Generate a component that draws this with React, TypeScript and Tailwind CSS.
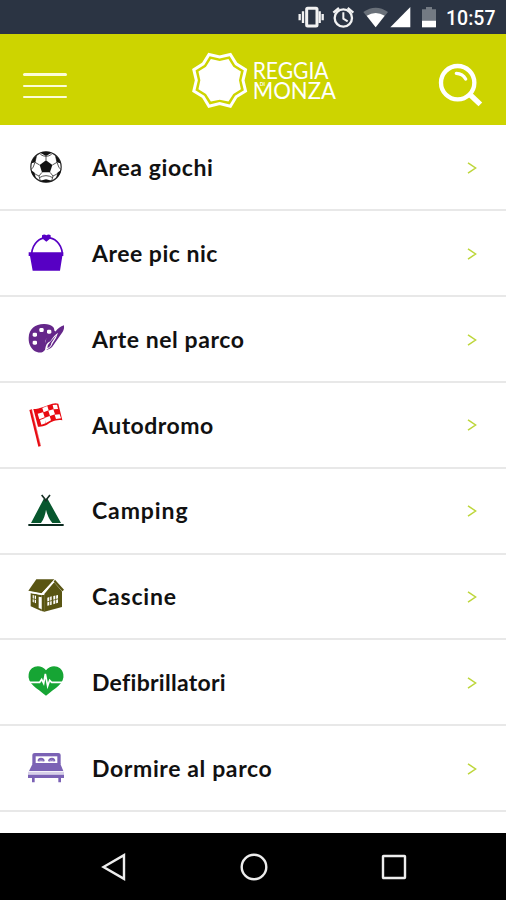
import type { ReactNode } from "react";

interface Category {
    label: string;
    tracking: string;
    icon: ReactNode;
}

function starPoints(cx: number, cy: number, outer: number, inner: number) {
    return Array.from({ length: 16 }, (_, i) => {
        const angle = (Math.PI / 8) * i;
        const r = i % 2 ? outer : inner;
        return `${(cx + r * Math.cos(angle)).toFixed(1)},${(cy + r * Math.sin(angle)).toFixed(1)}`;
    }).join(" ");
}

const SoccerBall = () => (
    <g>
        <circle cx="60" cy="72" r="45.5" fill="white" stroke="#222" strokeWidth="3.5" />
        <path d="M60 52L79 66L72 88H48L41 66Z" fill="#111" />
        <path
            d="M60 52V39M79 66L93 58M72 88L81 99M48 88L39 99M41 66L27 58M43 34Q60 46 77 34M93 58L89 40M93 58Q98 76 105 80M81 99Q95 94 99 86M81 99L77 114M39 99Q25 94 21 86M39 99L43 114M27 58Q22 76 15 80M27 58L31 40M40 104Q60 92 80 104"
            fill="none"
            stroke="#333"
            strokeWidth="2.5"
        />
        <path d="M43 29Q60 24 77 29L60 39ZM88 37Q101 48 103 61L93 58ZM32 37Q19 48 17 61L27 58ZM105 81Q102 98 90 106L95 89ZM15 81Q18 98 30 106L25 89ZM42 113L60 109L78 113Q60 122 42 113Z" fill="#111" />
    </g>
);

const Basket = () => (
    <g fill="#5700c4">
        <path d="M17 73C23 10 103 10 109 73" fill="none" stroke="#5700c4" strokeWidth="5" />
        <path d="M48 19Q55 14 61 19Q68 14 74 19V28L61 38L48 28Z" />
        <path d="M8 70H112V81H109L102 125H20L12 81H8Z" />
    </g>
);

const Palette = () => (
    <g>
        <path d="M8 68C9 42 28 27 53 27C76 26 89 37 84 52C75 65 54 69 59 84C65 106 49 117 33 111C16 105 7 87 8 68Z" fill="#65278a" />
        <path d="M80 45L63 62L54 98L82 88L89 49Z" fill="#65278a" />
        <g fill="white">
            <rect x="40" y="39" width="13" height="12" rx="4" />
            <rect x="63" y="44" width="13" height="12" rx="4" />
            <rect x="20" y="53" width="13" height="12" rx="4" />
            <rect x="20" y="77" width="13" height="12" rx="4" />
        </g>
        <path d="M114 31Q116 47 104 59L82 91Q75 102 61 105Q67 94 68 84L88 50Q98 36 114 31Z" fill="#65278a" />
        <path d="M96 53Q85 60 73 79Q58 84 58 105Q74 101 80 85Q91 71 96 53Z" fill="white" />
        <path d="M92 59L76 84Q75 95 64 99Q65 88 72 82Z" fill="#65278a" />
    </g>
);

const RaceFlag = () => (
    <g>
        <path d="M14 26L41 136" stroke="#e80b12" strokeWidth="8" />
        <path d="M18 28L44 134" stroke="white" strokeWidth="1.5" opacity=".7" />
        <path d="M22 24C43 24 61 13 79 8Q89 6 97 8L109 58C89 54 72 65 60 73Q49 78 36 77Z" fill="#e80b12" />
        <path d="M49 21L64 15L68 28L53 34ZM80 12L93 11L96 24L83 25ZM35 38L51 34L56 49L40 55ZM67 29L82 25L87 40L72 45ZM55 51L71 45L75 58L60 66ZM86 41L101 40L105 52L90 54ZM42 57L56 52L59 67L46 71Z" fill="white" />
    </g>
);

const Tent = () => (
    <g>
        <path d="M53 36L15 108H45Q57 91 60 68Q65 91 79 108H105L65 36Z" fill="#07572e" />
        <path d="M47 24L62 43M72 24L57 43" stroke="#183026" strokeWidth="5" />
        <path d="M7 114H113" stroke="#0b2b20" strokeWidth="6" />
    </g>
);

const Farmhouse = () => (
    <g fill="#595513">
        <path d="M31 22H85L47 64L7 56Z" />
        <path d="M14 63L46 69V117L14 103Z" />
        <path d="M84 31L108 58V105L55 119V66Z" />
        <path d="M46 69H56V119L46 117Z" />
        <path d="M8 60L47 67L85 27L112 57" fill="none" stroke="white" strokeWidth="4" />
        <path d="M87 23L114 53L109 58L83 29Z" />
        <path d="M20 69L30 71V94L20 90ZM38 74L47 76V112L38 108ZM64 77L77 73V98L64 101ZM82 72L96 69V92L82 97Z" fill="white" />
        <path d="M25 68V94M18 80L32 83M62 90L98 80M71 73V102M89 69V97" stroke="#595513" strokeWidth="2.5" />
    </g>
);

const HeartPulse = () => (
    <g>
        <path d="M60 37C76 17 108 23 112 49C117 75 88 91 60 113C32 91 3 75 8 49C12 23 44 17 60 37Z" fill="#16a534" />
        <path d="M4 73H41L47 64L53 76L58 48L65 84L71 67L77 73H116" fill="none" stroke="white" strokeWidth="5" />
    </g>
);

const Bed = () => (
    <g fill="#7b62b5">
        <path d="M19 61V33Q19 27 26 27H97Q104 27 104 33V61Z" />
        <path d="M29 37H94V59H29Z" fill="white" />
        <path d="M35 52Q34 41 45 41Q56 41 56 52ZM66 52Q67 41 78 41Q88 41 88 52Z" />
        <path d="M38 52Q45 44 53 52M69 52Q77 44 85 52" fill="none" stroke="#a997d0" strokeWidth="3" />
        <path d="M21 57H102L112 81H9Z" />
        <path d="M6 83H114V92H6Z" opacity=".3" />
        <path d="M6 92H114V102H105V115H97V102H26V115H18V102H6Z" />
    </g>
);

const categories: Category[] = [
    { label: "Area giochi", tracking: "tracking-[0.6px]", icon: <SoccerBall /> },
    { label: "Aree pic nic", tracking: "tracking-[0.5px]", icon: <Basket /> },
    { label: "Arte nel parco", tracking: "tracking-[0.57px]", icon: <Palette /> },
    { label: "Autodromo", tracking: "tracking-[0.48px]", icon: <RaceFlag /> },
    { label: "Camping", tracking: "tracking-[0.9px]", icon: <Tent /> },
    { label: "Cascine", tracking: "tracking-[0.8px]", icon: <Farmhouse /> },
    { label: "Defibrillatori", tracking: "tracking-[0.28px]", icon: <HeartPulse /> },
    { label: "Dormire al parco", tracking: "tracking-[0.62px]", icon: <Bed /> },
];

function StatusBar() {
    return (
        <div className="flex h-[34px] shrink-0 items-center justify-end bg-[#2b3443] pr-[11px] text-white">
            <svg viewBox="0 0 648 108" className="mt-0.5 h-9 w-[150px] shrink-0" preserveAspectRatio="xMinYMid slice">
                <g fill="none" stroke="#f2f2f2">
                    <rect x="50" y="25" width="31" height="53" rx="3" strokeWidth="9" />
                    <path d="M39 34V69M89 34V69" strokeWidth="7" />
                    <path d="M29 42V61M98 42V61" strokeWidth="7" />
                    <circle cx="160" cy="54" r="26" strokeWidth="7" />
                    <path d="M160 37V56L173 64" strokeWidth="6" />
                    <path d="M130 38L147 24M190 38L173 24" strokeWidth="7" />
                </g>
                <path d="M220 36Q257 10 294 36L257 82Z" fill="#697079" />
                <path d="M230 47Q257 31 284 47L257 82Z" fill="white" />
                <path d="M361 21V82H301Z" fill="white" />
                <path d="M396 28H408V21H426V28H438V62H396Z" fill="#737a83" />
                <path d="M396 62H438V82H396Z" fill="white" />
            </svg>
            <span className="mt-[3px] ml-1.5 w-[49px] whitespace-nowrap font-['Roboto',sans-serif] text-[19.5px] leading-none font-medium">
                10:57
            </span>
        </div>
    );
}

function Logo() {
    return (
        <svg viewBox="36 34 440 176" className="h-[58.67px] w-[146.67px] overflow-visible" fill="white">
            <polygon points={starPoints(122, 122, 84, 70)} fill="none" stroke="white" strokeWidth="9" />
            <polygon points={starPoints(122, 122, 69, 58)} />
            <g fontFamily="Lato, sans-serif" fontSize="67">
                <text x="221" y="119" textLength="228" lengthAdjust="spacingAndGlyphs">REGGIA</text>
                <text x="221" y="178" textLength="250" lengthAdjust="spacingAndGlyphs">MONZA</text>
            </g>
            <text x="242" y="139" fontFamily="Lato, sans-serif" fontSize="15" fontWeight="700">DI</text>
        </svg>
    );
}

function Header() {
    return (
        <header className="flex h-[91px] shrink-0 items-center justify-between bg-[#cdd400] pr-[23px] pl-[23px]">
            <button aria-label="Menu" className="mt-3 flex w-11 flex-col gap-[9px]">
                <span className="h-[3px] rounded-full bg-[#fcfdd8]" />
                <span className="h-0.5 rounded-full bg-[#fcfdd8]" />
                <span className="h-0.5 rounded-full bg-[#fcfdd8]" />
            </button>
            <div className="ml-[24px] pt-0.5">
                <Logo />
            </div>
            <button aria-label="Cerca" className="pt-2.5">
                <svg viewBox="54 36 135 132" className="h-11 w-[45px]" fill="none" stroke="white">
                    <circle cx="113" cy="95" r="50" strokeWidth="13" />
                    <path d="M148 129L181 160" strokeWidth="16" />
                    <path d="M109 67Q128 68 137 84" strokeWidth="10" strokeLinecap="round" />
                </svg>
            </button>
        </header>
    );
}

function NavigationBar() {
    return (
        <nav className="flex h-[67px] shrink-0 items-center justify-between bg-black pr-[98px] pl-[100px]">
            <svg viewBox="0 0 28 28" className="size-7" fill="none" stroke="#ededed" strokeWidth="2.4">
                <path d="M3.5 14L24 2.2V25.8Z" />
            </svg>
            <svg viewBox="0 0 28 28" className="size-7" fill="none" stroke="#ededed" strokeWidth="2.4">
                <circle cx="14" cy="14" r="12.3" />
            </svg>
            <svg viewBox="0 0 28 28" className="size-7" fill="none" stroke="#ededed" strokeWidth="2.4">
                <rect x="3" y="3" width="22" height="22" rx="0.5" />
            </svg>
        </nav>
    );
}

export default function App() {
    return (
        <div className="flex h-[900px] w-[506px] flex-col overflow-hidden bg-white">
            <StatusBar />
            <Header />
            <main className="flex-1 overflow-hidden pt-[0.6px]">
                {categories.map(({ label, tracking, icon }) => (
                    <div
                        key={label}
                        className="flex h-[85.8px] items-center border-b-2 border-[#e8e8e8] pr-[29px] pl-[26px]"
                    >
                        <svg viewBox="0 0 120 144" className="h-12 w-10 shrink-0">
                            {icon}
                        </svg>
                        <span className={`ml-[26px] flex-1 font-['Lato',sans-serif] text-[23px] font-bold whitespace-nowrap text-[#111] ${tracking}`}>
                            {label}
                        </span>
                        <svg viewBox="0 0 10 14" className="mt-px h-3.5 w-2.5" fill="none" stroke="#bdd63a" strokeWidth="1.5">
                            <path d="M1 1.8L8.6 7L1 12.2" />
                        </svg>
                    </div>
                ))}
            </main>
            <NavigationBar />
        </div>
    );
}
